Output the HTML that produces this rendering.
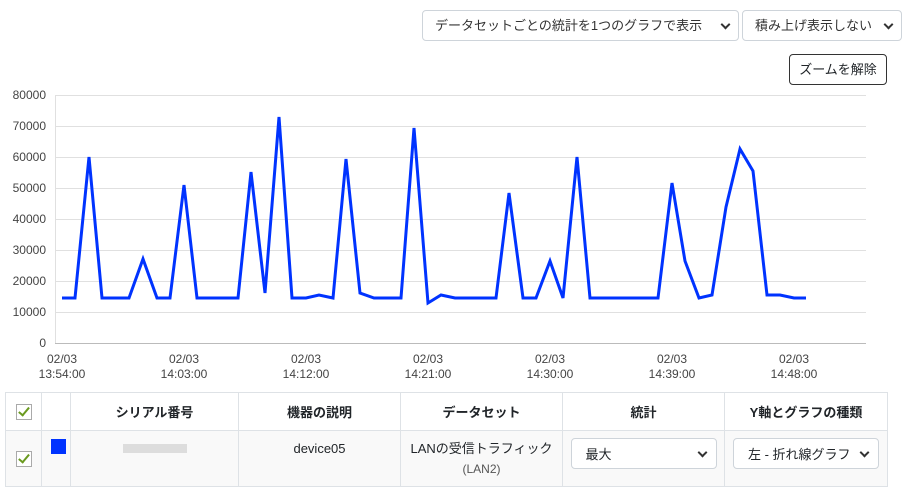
<!DOCTYPE html>
<html><head><meta charset="utf-8"><style>
body{margin:0;width:909px;height:493px;background:#fff;font-family:"Liberation Sans","Noto Sans CJK JP",sans-serif;color:#212529;position:relative;overflow:hidden}
.sel{position:absolute;border:1px solid #ced4da;border-radius:4px;background:#fff;font-size:13px;line-height:30px;box-sizing:border-box;padding-left:12px;color:#333}
.sel:after{content:"";position:absolute;right:9px;top:10px;width:5px;height:5px;border-right:2px solid #333;border-bottom:2px solid #333;transform:rotate(45deg)}
.btn{position:absolute;left:789px;top:54px;width:98px;height:31px;border:1px solid #333;border-radius:4px;box-sizing:border-box;font-size:13px;text-align:center;line-height:29px}
table{position:absolute;left:5px;top:392px;border-collapse:collapse;font-size:13px;table-layout:fixed;width:882px}
td,th{border:1px solid #dee2e6;text-align:center;padding:0}
th{height:37px;font-weight:bold}
tr.r{height:56px}
tr.r td{background:#f9f9f9;vertical-align:top;line-height:18px}
.cb{display:inline-block;width:14px;height:14px;border:1px solid #aaa;background:#fff;position:relative;vertical-align:middle}
.cb:after{content:"";position:absolute;left:4px;top:0px;width:4px;height:9px;border-right:2px solid #6a9a1f;border-bottom:2px solid #6a9a1f;transform:rotate(40deg)}
.is{position:relative;display:block;margin:0 auto;height:31px;border:1px solid #ced4da;border-radius:4px;background:#fff;text-align:left;padding-left:14px;line-height:31px;font-size:13px;box-sizing:border-box}
.is:after{content:"";position:absolute;right:10px;top:10px;width:5px;height:5px;border-right:2px solid #333;border-bottom:2px solid #333;transform:rotate(45deg)}
</style></head><body>
<div class="sel" style="left:422px;top:10px;width:317px;height:31px">データセットごとの統計を1つのグラフで表示</div>
<div class="sel" style="left:742px;top:10px;width:160px;height:31px">積み上げ表示しない</div>
<div class="btn">ズームを解除</div>
<svg width="909" height="390" style="position:absolute;left:0;top:0" font-family="Liberation Sans,sans-serif" font-size="12" fill="#444">
<g stroke="#e0e0e0" stroke-width="1">
<line x1="55" y1="95.5" x2="866" y2="95.5"/><line x1="55" y1="126.5" x2="866" y2="126.5"/><line x1="55" y1="157.5" x2="866" y2="157.5"/><line x1="55" y1="188.5" x2="866" y2="188.5"/><line x1="55" y1="219.5" x2="866" y2="219.5"/><line x1="55" y1="250.5" x2="866" y2="250.5"/><line x1="55" y1="281.5" x2="866" y2="281.5"/><line x1="55" y1="312.5" x2="866" y2="312.5"/>
<line x1="55.5" y1="95" x2="55.5" y2="343"/>
</g>
<line x1="55" y1="343.5" x2="866" y2="343.5" stroke="#bbb"/>
<g text-anchor="end">
<text x="46" y="99">80000</text><text x="46" y="130">70000</text><text x="46" y="161">60000</text><text x="46" y="192">50000</text><text x="46" y="223">40000</text><text x="46" y="254">30000</text><text x="46" y="285">20000</text><text x="46" y="316">10000</text><text x="46" y="347">0</text>
</g>
<g text-anchor="middle">
<text x="62" y="363">02/03</text><text x="62" y="378">13:54:00</text>
<text x="184" y="363">02/03</text><text x="184" y="378">14:03:00</text>
<text x="306" y="363">02/03</text><text x="306" y="378">14:12:00</text>
<text x="428" y="363">02/03</text><text x="428" y="378">14:21:00</text>
<text x="550" y="363">02/03</text><text x="550" y="378">14:30:00</text>
<text x="672" y="363">02/03</text><text x="672" y="378">14:39:00</text>
<text x="794" y="363">02/03</text><text x="794" y="378">14:48:00</text>
</g>
<polyline fill="none" stroke="#0033ff" stroke-width="3" stroke-linejoin="miter" points="62,298 75,298 89,157 102,298 116,298 129,298 143,259 157,298 170,298 184,185 197,298 211,298 224,298 238,298 251,172 265,293 279,117 292,298 306,298 319,295 333,298 346,159 360,293 374,298 387,298 401,298 414,128 428,303 441,295 455,298 469,298 482,298 496,298 509,193 523,298 536,298 550,261 563,298 577,157 590,298 604,298 618,298 631,298 645,298 658,298 672,183 685,261 699,298 712,295 726,207 740,149 753,171 767,295 780,295 794,298 806,298"/>
</svg>
<table>
<colgroup><col style="width:36px"><col style="width:29px"><col style="width:168px"><col style="width:162px"><col style="width:162px"><col style="width:162px"><col style="width:163px"></colgroup>
<tr><th><span class="cb"></span></th><th></th><th>シリアル番号</th><th>機器の説明</th><th>データセット</th><th>統計</th><th>Y軸とグラフの種類</th></tr>
<tr class="r"><td style="vertical-align:middle"><span class="cb"></span></td><td><div style="width:15px;height:15px;background:#0033ff;margin:8px auto 0 9px"></div></td><td style="padding-top:13px"><span style="display:inline-block;width:64px;height:9px;background:#ddd;vertical-align:top"></span></td><td style="padding-top:9px">device05</td><td style="padding-top:9px">LANの受信トラフィック<br><span style="font-size:12px;color:#555;line-height:22px">(LAN2)</span></td><td style="padding-top:7px"><span class="is" style="width:146px">最大</span></td><td style="padding-top:7px"><span class="is" style="width:146px">左 - 折れ線グラフ</span></td></tr>
</table>
</body></html>
